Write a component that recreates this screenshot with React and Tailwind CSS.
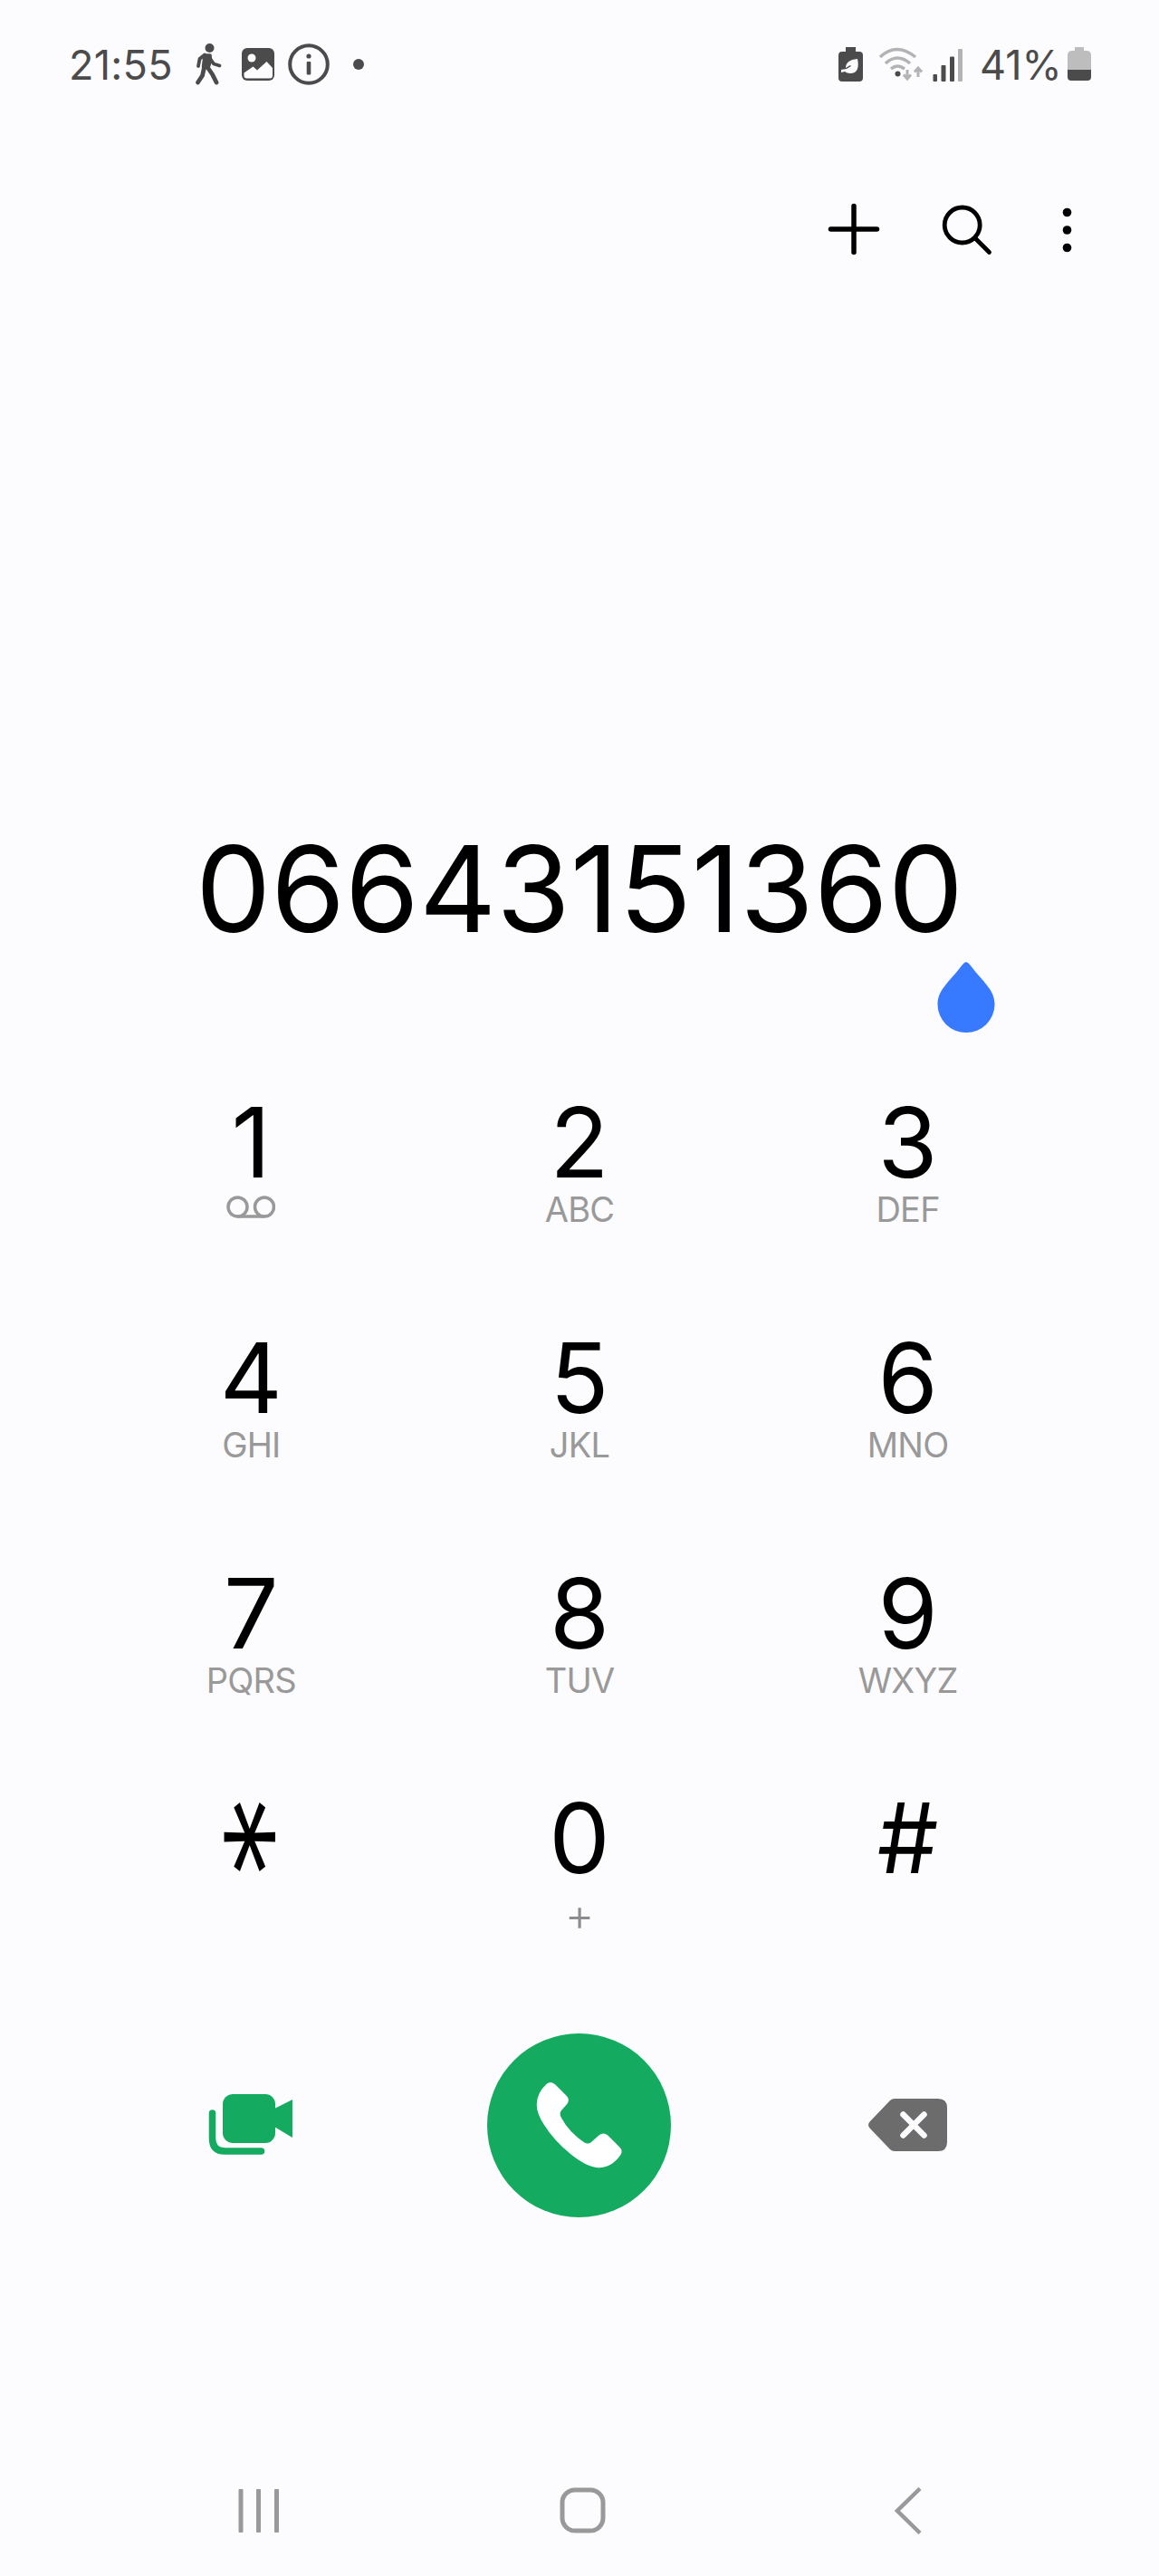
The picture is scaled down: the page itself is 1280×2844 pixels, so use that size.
import {useState} from "react";

const keys = [
    {digit: "1", letters: "voicemail"},
    {digit: "2", letters: "ABC"},
    {digit: "3", letters: "DEF"},
    {digit: "4", letters: "GHI"},
    {digit: "5", letters: "JKL"},
    {digit: "6", letters: "MNO"},
    {digit: "7", letters: "PQRS"},
    {digit: "8", letters: "TUV"},
    {digit: "9", letters: "WXYZ"},
    {digit: "*", letters: ""},
    {digit: "0", letters: "+"},
    {digit: "#", letters: ""},
];

const StatusBar = () => {
    return (
        <div className="flex justify-between h-[142px] pl-[76px] pr-[75px] text-[#4b4b4b]">
            <div className="flex h-[142px] items-center">
                <p className="w-[134px] text-[45px] leading-none tracking-[0.3px]">21:55</p>
                {/*Walking*/}
                <svg className="w-[36px] h-[50px]" viewBox="0 0 36 50" fill="none" stroke="currentColor"
                     strokeLinecap="round" strokeLinejoin="round">
                    <circle cx="21.5" cy="7" r="5" fill="currentColor" stroke="none"/>
                    <path d="M16 15h6l.5 6-2.500 8-5.500-1z" fill="currentColor" strokeWidth="3.500"/>
                    <path d="M16 14.500l-5.500 4.500-1.500 8M23 20l3 4.500 6.500 2" strokeWidth="3.8"/>
                    <path d="M15.500 28.500l-2 9-5 7.500M19 28l5.500 8 4.500 9" strokeWidth="4.8"/>
                </svg>
                {/*Image*/}
                <svg className="ml-[20px] w-[38px] h-[38px]" viewBox="0 0 38 38">
                    <rect x="1" y="1" width="36" height="36" rx="6" fill="currentColor"/>
                    <circle cx="12" cy="12" r="4.500" fill="#fcfcff"/>
                    <path d="M3.500 28.500l10-7 4.500 4 10.500-9.500 6.500 7v8.500q0 3-3 3h-25.500q-3 0-3-3z" fill="#fcfcff"/>
                </svg>
                {/*Info*/}
                <svg className="ml-[14px] w-[46px] h-[46px]" viewBox="0 0 46 46" fill="currentColor">
                    <circle cx="23" cy="23" r="20.8" fill="none" stroke="currentColor" strokeWidth="4"/>
                    <circle cx="23" cy="14" r="2.600"/>
                    <rect x="20.700" y="20" width="4.600" height="14.500" rx="1"/>
                </svg>
                <span className="ml-[26px] w-[12px] h-[12px] rounded-full bg-[#4b4b4b]"></span>
            </div>
            <div className="flex h-[142px] items-center">
                {/*Power saving*/}
                <svg className="w-[28px] h-[38px]" viewBox="0 0 28 38">
                    <path d="M8 0h11v5h4q4 0 4 4v25q0 4-4 4h-19q-4 0-4-4v-25q0-4 4-4h4z" fill="currentColor"/>
                    <path d="M21 13q3 15-7 16-4 .5-7-2l-4 1v-3l6-1 5-3-1-1-5 3q0-9 13-10z" fill="#fcfcff"/>
                </svg>
                {/*Wifi*/}
                <svg className="ml-[16px] w-[50px] h-[40px]" viewBox="0 0 50 40" fill="none" stroke="#b3b3b3"
                     strokeWidth="3.500">
                    <path d="M2 12q18-17 39 0M8 19q13-12 27 0M14 25q7-6 15 0"/>
                    <circle cx="21.500" cy="30.500" r="3" fill="#4b4b4b" stroke="none"/>
                    <path d="M32 26v10M28 31.500l4 4.500 4-4.500M44 34v-9M40 28.500l4-4.500 4 4.500" strokeWidth="3"/>
                </svg>
                {/*Signal*/}
                <svg className="ml-[10px] w-[34px] h-[38px]" viewBox="0 0 34 38" fill="currentColor">
                    <rect x="0.500" y="30" width="4.500" height="8" rx="1"/>
                    <rect x="9.500" y="20" width="5" height="18" rx="1"/>
                    <rect x="19" y="10.500" width="5" height="27.500" rx="1"/>
                    <rect x="28" y="2" width="5" height="36" rx="1" fill="#b3b3b3"/>
                </svg>
                <p className="ml-[18px] w-[97px] text-[45px] leading-none">41%</p>
                {/*Battery*/}
                <svg className="w-[26px] h-[38px]" viewBox="0 0 26 38">
                    <path d="M8 0h10v4h3q5 0 5 5v16h-26v-16q0-5 5-5h3z" fill="#bdbdbd"/>
                    <path d="M0 25h26v8q0 4-4 4h-18q-4 0-4-4z" fill="currentColor"/>
                </svg>
            </div>
        </div>
    )
}

const App = () => {
    const [number, setNumber] = useState("06643151360");

    return (
        <div className="flex flex-col w-[1280px] h-[2844px] bg-[#fcfcff] text-black font-['Inter',sans-serif]">
            <StatusBar/>

            {/*Toolbar*/}
            <div className="flex justify-end items-center h-[222px] pr-[92px]">
                <svg className="w-[60px] h-[60px]" viewBox="0 0 60 60" stroke="black" strokeWidth="5.500"
                     strokeLinecap="round">
                    <path d="M30 4.500v51M4.500 30h51"/>
                </svg>
                <svg className="ml-[65px] w-[60px] h-[60px]" viewBox="0 0 60 60" fill="none" stroke="black"
                     strokeWidth="4.800" strokeLinecap="round">
                    <circle cx="24.700" cy="25.500" r="19.500"/>
                    <path d="M39.500 40.500l15 15"/>
                </svg>
                <svg className="ml-[71px] w-[19px] h-[60px]" viewBox="0 0 19 60">
                    <circle cx="9.500" cy="11.500" r="4.800"/>
                    <circle cx="9.500" cy="31" r="4.800"/>
                    <circle cx="9.500" cy="50.500" r="4.800"/>
                </svg>
            </div>

            {/*Dialled number*/}
            <div className="flex justify-center mt-[551px] h-[293px]">
                <div className="relative">
                    <p className="text-[132px] leading-none">{number}</p>
                    <svg className="absolute left-[819px] top-[147px] w-[64px] h-[79px]" viewBox="0 0 64 79">
                        <path d="M32 0C35 1 37 4 40 8C53 24 63.500 32 63.500 47a31.500 31 0 0 1-63 0C.5 32 11 24 24 8C27 4 29 1 32 0z"
                              fill="#387aff"/>
                    </svg>
                </div>
            </div>

            {/*Keypad*/}
            <div className="grid grid-cols-3 grid-rows-[260px_260px_248px_268px] px-[96px]">
                {keys.map((key) => {
                    return (
                        <button key={key.digit} className="flex flex-col items-center"
                                onClick={() => setNumber(number + key.digit)}>
                            {key.digit === "*" ?
                                <span className="block h-[107px] text-[107px] leading-none font-light origin-[50%_35px] translate-y-[17px] rotate-90 scale-x-[1.86] scale-y-[1.29]">*</span>
                                : <span className="block h-[107px] text-[107px] leading-none">{key.digit}</span>}
                            {key.letters === "voicemail" ?
                                <svg className="mt-[5px] w-[54px] h-[26px]" viewBox="0 0 54 26" fill="none"
                                     stroke="#999999" strokeWidth="3.500">
                                    <circle cx="12.500" cy="12.500" r="10.500"/>
                                    <circle cx="42" cy="12.500" r="10.500"/>
                                    <path d="M12 23h30"/>
                                </svg>
                                : key.letters === "+" ?
                                    <span className="mt-[12px] text-[50px] leading-[38px] font-light text-[#8c8c8c]">+</span>
                                    : <span className="text-[38px] leading-[40px] tracking-[-0.8px] text-[#999999]">{key.letters}</span>}
                        </button>
                    )
                })}
            </div>

            {/*Call actions*/}
            <div className="grid grid-cols-3 h-[204px] px-[96px] items-center justify-items-center">
                <button>
                    <svg className="w-[94px] h-[68px]" viewBox="0 0 94 68" fill="#14ab60">
                        <rect x="16" y="0" width="58" height="54" rx="11"/>
                        <path d="M73 16l20-10v42l-20-12z"/>
                        <path d="M4.500 21v28q0 14 14 14h40" fill="none" stroke="#14ab60" strokeWidth="7.500"
                              strokeLinecap="round"/>
                    </svg>
                </button>
                <button className="w-[203px] h-[203px] rounded-full bg-[#14ab60]">
                    <svg className="w-[203px] h-[203px]" viewBox="0 0 204 204" fill="white">
                        <path d="M66 56q5-4 10 1l12 12q4 4 1 9l-7 8q-2 3 0 7 9 17 26 28 4 2 7 0l9-8q5-4 10 0l13 13q4 4 1 9-10 14-24 14-12 0-30-14-20-16-31-34-8-12-8-22 0-13 11-23z"/>
                    </svg>
                </button>
                <button>
                    <svg className="w-[88px] h-[60px]" viewBox="0 0 88 60">
                        <path d="M29 1h48q10 0 10 10v38q0 10-10 10h-48q-3 0-5-2l-22-23q-4-4 0-8l22-23q2-2 5-2z"
                              fill="#6c6c6c"/>
                        <path d="M38.500 18.500l23 23M61.500 18.500l-23 23" stroke="#fcfcff" strokeWidth="6.500"
                              strokeLinecap="round"/>
                    </svg>
                </button>
            </div>

            {/*Navigation*/}
            <div className="flex mt-[298px] pl-[263px]">
                <svg className="w-[46px] h-[52px]" viewBox="0 0 46 52" fill="#999999">
                    <rect x="0.500" y="2" width="5" height="48" rx="1"/>
                    <rect x="20" y="2" width="5" height="48" rx="1"/>
                    <rect x="40" y="2" width="5" height="48" rx="1"/>
                </svg>
                <svg className="ml-[309px] w-[52px] h-[52px]" viewBox="0 0 52 52" fill="none" stroke="#999999"
                     strokeWidth="5">
                    <rect x="3" y="3" width="45" height="45" rx="14"/>
                </svg>
                <svg className="ml-[318px] w-[30px] h-[52px]" viewBox="0 0 30 52" fill="none" stroke="#999999"
                     strokeWidth="4.500">
                    <path d="M28 1.500l-25 24.500 25 24.500"/>
                </svg>
            </div>
        </div>
    )
}

export default App;
